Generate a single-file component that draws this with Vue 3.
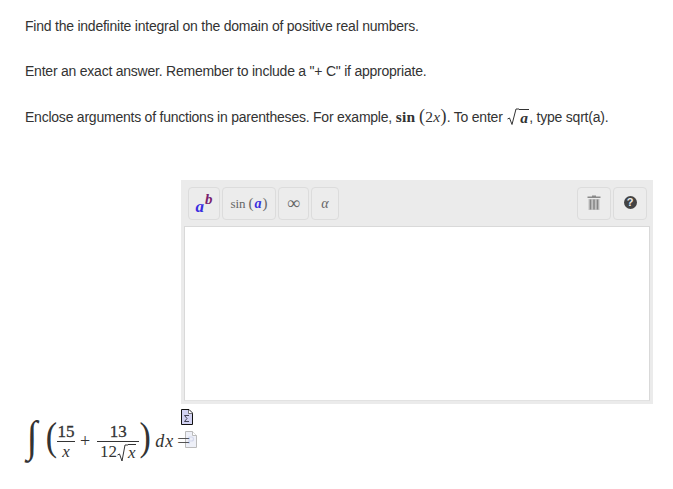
<script setup>
const lines = ['Find the indefinite integral on the domain of positive real numbers.', 'Enter an exact answer. Remember to include a "+ C" if appropriate.']
</script>

<template>
  <div class="page">
    <p v-for="l in lines" :key="l" class="para">{{ l }}</p>
    <p class="para">
      Enclose arguments of functions in parentheses. For example,
      <span class="m"><b>sin</b>&#8201;<span class="paren">(</span>2<i>x</i><span class="paren">)</span></span>. To enter
      <span class="sq"><svg class="rad" width="12" height="18" viewBox="0 0 12 18"><path d="M0.500 11 L2.500 10 L5 16.500 L9 1 H12" fill="none" stroke="#333" stroke-width="1"/></svg><i class="m radicand">a</i></span>, type sqrt(a).
    </p>

    <div class="editor">
      <div class="toolbar">
        <div class="group">
          <button class="btn pow"><i class="base">a</i><i class="exp">b</i></button>
          <button class="btn fn">sin<span class="lp">(</span><i class="base">a</i><span class="rp">)</span></button>
          <button class="btn inf">∞</button>
          <button class="btn alpha"><i>α</i></button>
        </div>
        <div class="group">
          <button class="btn icon">
            <svg class="raised" width="14" height="15" viewBox="0 0 14 15">
              <path d="M5 0.500h4v1h4.500v1.500h-13v-1.500h4.500z" fill="#8a8a8a"/>
              <path d="M1.500 4h11v11h-11z" fill="#c2c2c2"/>
              <path d="M3.500 4.500v10M7 4.500v10M10.500 4.500v10" stroke="#858585" stroke-width="1.500"/>
            </svg>
          </button>
          <button class="btn icon">
            <span class="help raised">?</span>
          </button>
        </div>
      </div>
      <div class="canvas"></div>
    </div>

    <div class="formula">
      <span class="int">∫</span>
      <span class="big open">(</span>
      <span class="frac small"><span class="num">15</span><span class="den"><i>x</i></span></span>
      <span class="plus">+</span>
      <span class="frac wide"><span class="num">13</span><span class="den">12<svg class="rad2" width="11" height="18" viewBox="0 0 11 18"><path d="M0.500 11 L2.500 10 L5 17 L8 1 H11" fill="none" stroke="#333" stroke-width="1"/></svg><i class="over">x</i></span></span>
      <span class="big close">)</span>
      <span class="dx"><i>dx</i></span>
      <span class="eq">=</span>
      <div class="docs">
        <svg width="12" height="16" viewBox="0 0 12 16">
          <path d="M0.500 0.500h7.500l3.500 3.500v11.500h-11z" fill="#d2d2f2" stroke="#111" stroke-width="1"/>
          <path d="M7.500 1v3.500h4" fill="#fff" stroke="#555" stroke-width="0.800"/>
          <path d="M3.500 6.500h4.500M3.500 6.500l2.500 3-2.500 3h4.500" fill="none" stroke="#334" stroke-width="0.900"/>
        </svg>
        <svg class="doc2" width="12" height="17" viewBox="0 0 12 17">
          <path d="M0.500 0.500h7l4 4v12h-11z" fill="#eef0f8" stroke="#bbb"/>
          <path d="M7.500 0.500v4h4" fill="#fff" stroke="#bbb"/>
          <path d="M4 13V6h2.500a2 2 0 0 1 0 4H4" fill="none" stroke="#d4d8ec" stroke-width="1.200"/>
        </svg>
      </div>
    </div>
  </div>
</template>

<style scoped>
.page {
  width: 673px;
  height: 489px;
  padding: 18px 0 0 25px;
  box-sizing: border-box;
  font-family: "Liberation Sans", Arial, sans-serif;
  font-size: 14px;
  letter-spacing: -0.230px;
  color: #333;
  overflow: hidden;
}
.para {
  margin: 0 0 29px;
  height: 16px;
  line-height: 16px;
  white-space: nowrap;
}
.m {
  font-family: "Liberation Serif", serif;
  font-size: 15.500px;
  letter-spacing: 0.300px;
  line-height: 0;
}
.m b { font-weight: bold; }
.paren { font-size: 18px; }
.sq { display: inline-flex; align-items: flex-end; vertical-align: -4px; line-height: 0; margin-left: 1px; }
.rad { display: block; }
.radicand {
  font-weight: bold;
  border-top: 1px solid #333;
  line-height: 16px;
  height: 16px;
  padding: 0 1px;
}
.editor {
  margin: 56px 0 0 156px;
  width: 472px;
  height: 224px;
  background: #ebebeb;
  padding: 0 3px 3px;
  box-sizing: border-box;
  display: flex;
  flex-direction: column;
  letter-spacing: 0;
}
.toolbar {
  height: 46px;
  flex: none;
  display: flex;
  justify-content: space-between;
  align-items: flex-start;
  padding: 7px 3px 0 4px;
  box-sizing: border-box;
}
.group { display: flex; gap: 2px; }
.btn {
  height: 33px;
  margin: 0;
  padding: 0;
  border: 1px solid #dcdcdc;
  border-radius: 4px;
  background: #ececec;
  display: flex;
  align-items: center;
  justify-content: center;
  font-family: "Liberation Serif", serif;
  color: #666;
}
.pow { width: 32px; font-size: 16px; font-weight: bold; }
.base { color: #3a2ee0; font-weight: bold; }
.pow .base { font-size: 17px; margin-top: 6px; }
.exp { color: #7a1f6e; font-size: 15px; margin-top: -9px; margin-left: 1px; }
.fn { width: 54px; font-size: 13px; }
.fn .base { font-size: 14px; }
.lp { margin: 0 1px 0 3px; font-size: 15px; }
.rp { margin-left: 1px; font-size: 15px; }
.inf { width: 31px; font-size: 18px; }
.alpha { width: 28px; font-size: 14px; }
.icon { width: 34px; }
.raised { margin-bottom: 3px; display: block; }
.help {
  width: 13px;
  height: 13px;
  border-radius: 50%;
  background: #444;
  color: #eee;
  font: bold 11px/13px "Liberation Sans", sans-serif;
  text-align: center;
}
.canvas {
  flex: 1;
  background: #fff;
  border: 1px solid #d9d9d9;
  border-bottom-color: #e2e2e2;
}
.formula {
  margin: 6px 0 0 0;
  height: 62px;
  display: flex;
  align-items: center;
  font-family: "Liberation Serif", serif;
  font-size: 17px;
  letter-spacing: 0;
  color: #333;
}
.int {
  width: 20px;
  font-size: 30px;
  font-style: italic;
  line-height: 1;
  text-align: center;
  transform: translate(-3px, -5px) scale(1.300, 1.450);
}
.big {
  width: 8px;
  font-size: 40px;
  line-height: 1;
  transform: scaleX(0.850);
  margin-top: -8px;
  text-align: center;
}
.open { width: 11px; }
.frac {
  display: inline-flex;
  flex-direction: column;
  align-items: center;
  margin-top: 2px;
}
.num {
  width: 100%;
  text-align: center;
  border-bottom: 1px solid #333;
  line-height: 16px;
  padding-bottom: 1px;
  -webkit-text-stroke: 0.300px #333;
}
.small { width: 18px; margin-left: 1px; }
.wide { width: 42px; }
.den { display: flex; align-items: flex-end; line-height: 18px; padding: 1px 0 0; }
.rad2 { display: block; margin-bottom: -1px; }
.over { border-top: 1px solid #333; line-height: 16px; height: 16px; padding-right: 1px; }
.plus { margin: 0 7px 0 5px; font-size: 18px; }
.dx { margin-left: 8px; font-size: 18px; letter-spacing: 1px; }
.eq { width: 10px; flex: none; font-size: 18px; margin-left: 3px; color: #555; transform: scaleX(1.300); transform-origin: left center; }
.docs {
  display: flex;
  flex-direction: column;
  gap: 6px;
  margin-top: -25px;
  margin-left: -6px;
  align-items: flex-start;
  flex: none;
}
.doc2 { display: block; margin-left: 4px; }
</style>
